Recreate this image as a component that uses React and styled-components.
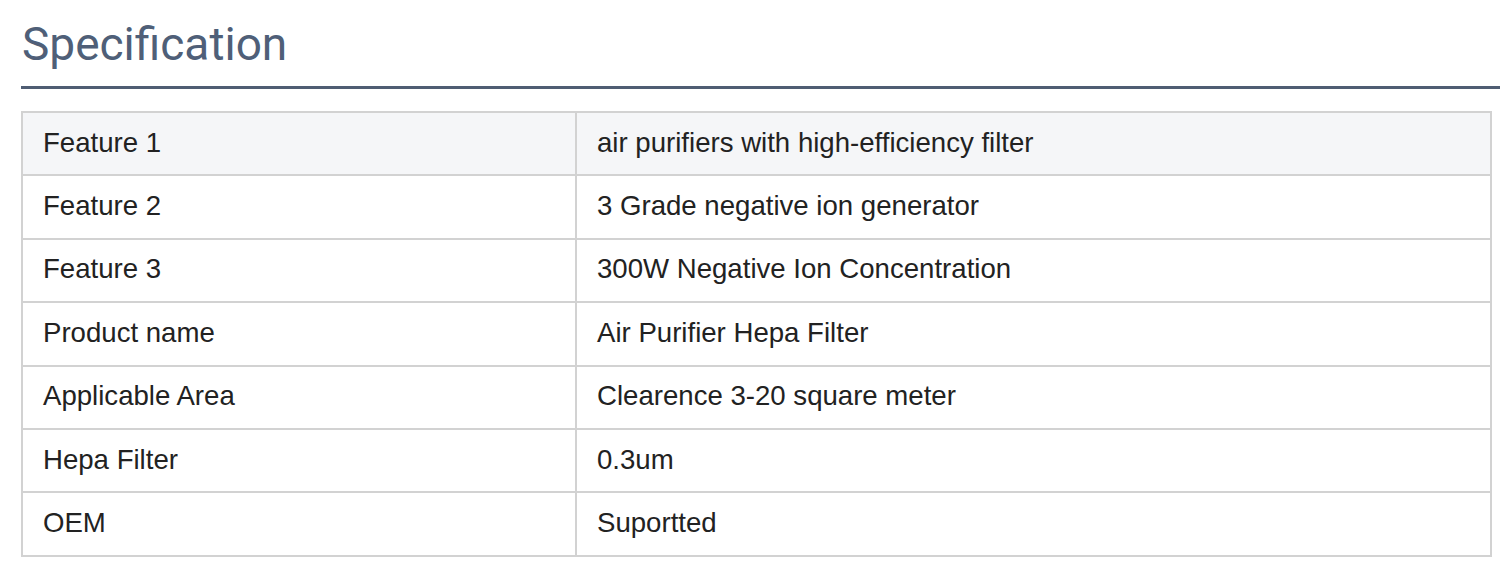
import React from "react";
import styled, { createGlobalStyle } from "styled-components";

const rows = [
  ["Feature 1", "air purifiers with high-efficiency filter"],
  ["Feature 2", "3 Grade negative ion generator"],
  ["Feature 3", "300W Negative Ion Concentration"],
  ["Product name", "Air Purifier Hepa Filter"],
  ["Applicable Area", "Clearence 3-20 square meter"],
  ["Hepa Filter", "0.3um"],
  ["OEM", "Suportted"],
];

const Global = createGlobalStyle`
  body { margin:0; background:#fff; }
`;

const Wrap = styled.section` padding:16px 0 0 21px; `;
const Title = styled.h2`
  margin:0; padding:0 0 14px 1px;
  font-family:Roboto, "Noto Sans", sans-serif; font-weight:400;
  font-size:46px; line-height:56px; color:#4f5f78;
  border-bottom:3px solid #4f5d73;
`;
const Table = styled.table`
  margin-top:22px; width:1471px;
  border-collapse:collapse; border:2px solid #d2d2d2;
  font-family:"Liberation Sans", Arial, sans-serif; font-size:27.6px; color:#222;
`;
const Row = styled.tr` background:${p => (p.$shade ? "#f5f6f8" : "#fff")}; `;
const Cell = styled.td`
  height:63.4px; padding:0 0 2px 20px; box-sizing:border-box;
  border:2px solid #d2d2d2; width:${p => p.$w || "auto"};
`;

export default function App() {
  return (
    <Wrap>
      <Global />
      <Title>Specification</Title>
      <Table>
        <tbody>
          {rows.map((r, i) => (
            <Row key={i} $shade={i === 0}>
              <Cell $w="554px">{r[0]}</Cell>
              <Cell>{r[1]}</Cell>
            </Row>
          ))}
        </tbody>
      </Table>
    </Wrap>
  );
}
